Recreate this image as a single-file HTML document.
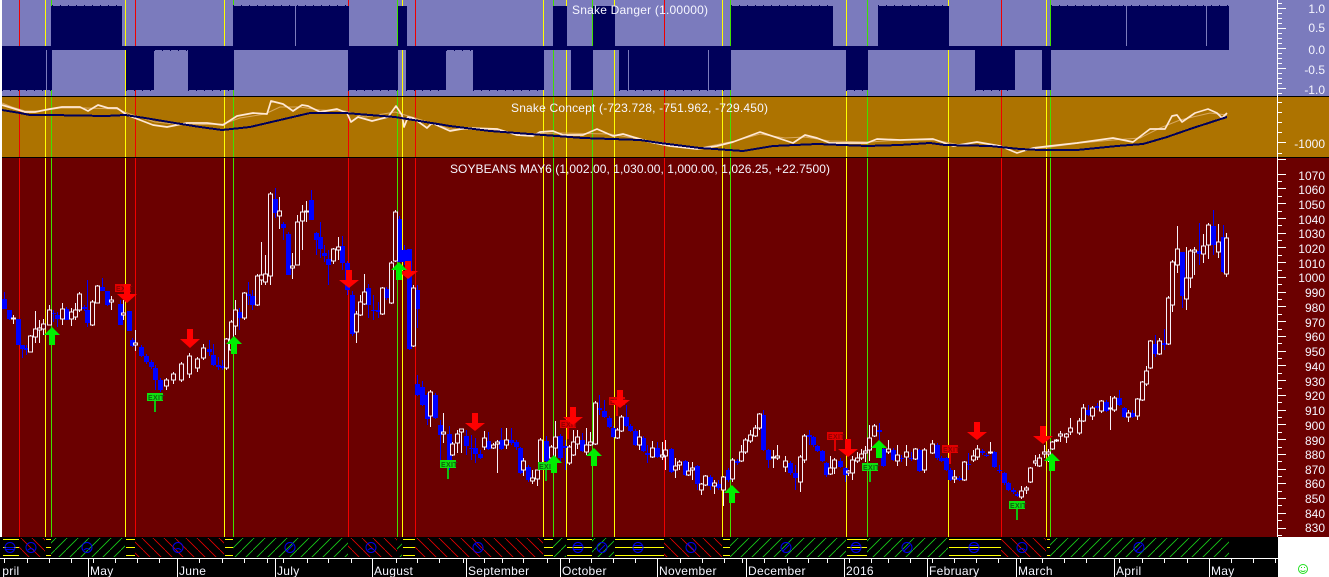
<!DOCTYPE html>
<html lang="en"><head><meta charset="utf-8"><title>Soybeans May6</title>
<style>
html,body{margin:0;padding:0;width:1329px;height:577px;overflow:hidden;background:#fff}
svg{display:block}
text{font-family:"Liberation Sans",Arial,sans-serif;font-size:12px;fill:#f6f6ff}
.m{letter-spacing:.3px}
.x{font-size:7px;font-weight:bold;letter-spacing:.3px}
</style></head><body>
<svg width="1329" height="577" viewBox="0 0 1329 577" xmlns="http://www.w3.org/2000/svg">
<defs>
<pattern id="hg" patternUnits="userSpaceOnUse" width="11" height="11"><path d="M-1 12L12 -1" stroke="#18d018" stroke-width=".8"/></pattern>
<pattern id="hr" patternUnits="userSpaceOnUse" width="11" height="11"><path d="M-1 -1L12 12" stroke="#e80000" stroke-width=".8"/></pattern>
</defs>
<!-- panels -->
<rect x="2" y="0" width="1327" height="96" fill="#7b7bbd"/>
<rect x="2" y="97" width="1327" height="60" fill="#ad7300"/>
<rect x="2" y="158" width="1327" height="379" fill="#6b0000"/>
<rect x="0" y="537" width="1278" height="21" fill="#000"/>
<rect x="0" y="558" width="1278" height="19" fill="#000"/>
<!-- vertical signal lines -->
<g stroke-width="1" shape-rendering="crispEdges">
<path stroke="#f00000" d="M19.5 0V537M135.5 0V537M348.5 0V537M415.5 0V537M664.5 0V537M1001.5 0V537"/>
<path stroke="#ffff00" d="M45.5 0V537M125.5 0V537M224.5 0V537M402.5 0V537M543.5 0V537M566.5 0V537M614.5 0V537M722.5 0V537M846.5 0V537M948.5 0V537M1046.5 0V537"/>
<path stroke="#40e000" d="M51.5 0V537M233.5 0V537M397.5 0V537M553.5 0V537M592.5 0V537M730.5 0V537M867.5 0V537M1050.5 0V537"/>
</g>
<!-- Snake Danger -->
<g fill="#00005a" shape-rendering="crispEdges">
<rect x="2" y="46" width="1227" height="4"/>
<rect x="51" y="6" width="71" height="44"/><rect x="233" y="6" width="62" height="44"/><rect x="296" y="6" width="53" height="44"/><rect x="398" y="6" width="9" height="44"/>
<rect x="553" y="6" width="14" height="44"/><rect x="593" y="6" width="22" height="44"/><rect x="731" y="6" width="102" height="44"/><rect x="878" y="6" width="71" height="44"/>
<rect x="1051" y="6" width="75" height="44"/><rect x="1127" y="6" width="79" height="44"/><rect x="1207" y="6" width="22" height="44"/>
<rect x="2" y="46" width="44" height="44"/><rect x="47" y="46" width="5" height="44"/><rect x="126" y="46" width="28" height="44"/><rect x="188" y="46" width="46" height="44"/>
<rect x="348" y="46" width="50" height="44"/><rect x="406" y="46" width="40" height="44"/><rect x="473" y="46" width="71" height="44"/><rect x="571" y="46" width="22" height="44"/>
<rect x="619" y="46" width="9" height="44"/><rect x="629" y="46" width="79" height="44"/><rect x="709" y="46" width="22" height="44"/><rect x="846" y="46" width="22" height="44"/>
<rect x="975" y="46" width="40" height="44"/><rect x="1042" y="46" width="9" height="44"/>
</g>
<g fill="none" stroke="#00005a" stroke-dasharray="1 7" shape-rendering="crispEdges">
<path d="M52 5.5H122M233 5.5H349M731 5.5H833M878 5.5H949M1051 5.5H1229M2 90.5H52M126 90.5H154M188 90.5H234M348 90.5H398M406 90.5H446M473 90.5H544M619 90.5H731M846 90.5H868M975 90.5H1015M154 50.5H233M446 50.5H473"/>
</g>
<!-- separators -->
<rect x="2" y="96" width="1276" height="1" fill="#000"/>
<rect x="2" y="157" width="1276" height="1" fill="#000"/>
<rect x="1278" y="96" width="51" height="1" fill="#000"/>
<rect x="1278" y="157" width="51" height="1" fill="#000"/>
<!-- Snake Concept -->
<g fill="none" stroke-linejoin="round">
<path stroke="#d8a860" stroke-width="1" d="M2 103L12 107L25 111L40 111L60 108L85 108L117 109L130 114L155 122L185 125L223 124L240 118L265 114L280 107L300 107L320 110L345 111L365 117L395 112L415 118L450 129L497 130L520 134L560 133L610 134L650 141L700 148L735 141L760 134L785 138L805 137L830 141L870 142L900 140L935 140L960 145L1000 146L1020 150L1050 147L1080 143L1113 140L1140 138L1160 128L1180 120L1210 113L1227 115"/>
<path stroke="#ffe8d4" stroke-width="1.7" d="M2 105L12 108L25 112L35 112L50 109L62 107L80 107L88 111L98 105L108 108L117 108L127 115L153 125L167 127L187 123L207 123L223 125L237 116L253 113L267 114L271 101L283 104L293 111L302 105L308 106L320 112L337 109L347 113L351 122L358 117L372 121L388 117L396 106L402 115L404 127L408 117L413 118L427 128L432 123L450 131L467 128L497 129L517 135L533 136L540 132L553 131L563 135L583 135L597 129L613 136L623 134L650 142L670 146L697 149L717 146L733 142L760 132L793 143L805 135L817 138L830 143L867 143L877 139L900 140L933 139L953 146L977 142L1000 146L1017 153L1033 148L1050 146L1077 143L1113 138L1133 142L1150 129L1165 129L1172 116L1177 115L1182 122L1195 113L1208 109L1217 113L1222 118L1227 113"/>
<path stroke="#00005a" stroke-width="2" shape-rendering="crispEdges" d="M2 110L20 113L30 115L50 115L106 116L125 115L145 118L175 123L200 127L222 130L250 127L280 120L310 113L345 113L395 117L450 126L490 131L530 134L583 138L640 140L660 143L700 148L743 151L773 146L817 144L867 146L900 145L930 143L945 145L990 146L1020 149L1040 150L1077 150L1117 146L1143 144L1167 137L1193 128L1227 117"/>
</g>
<!-- candles: blue -->
<g fill="none" stroke="#0000ff" shape-rendering="crispEdges">
<path stroke-width="1" d="M4.5 292V309M9.5 310V320M18.5 319V345M22.5 345V358M26.5 345V355M53.5 310V322M57.5 312V327M66.5 307V320M84.5 305V311M87.5 280V327M102.5 278V291M107.5 291V306M120.5 300V325M129.5 311V331M132.5 338V347M141.5 345V357M146.5 354V364M151.5 360V369M155.5 365V390M160.5 378V392M213.5 344V366M218.5 357V370M222.5 360V370M209.5 340V356M239.5 308V330M248.5 282V305M252.5 290V310M275.5 188V218M283.5 222V240M288.5 232V275M311.5 190V220M316.5 232V255M320.5 222V258M324.5 245V262M328.5 250V285M342.5 236V270M347.5 261V295M352.5 291V336M368.5 284V318M373.5 295V320M378.5 302V318M386.5 287V300M399.5 216V262M404.5 245V265M409.5 249V350M417.5 285V328M417.5 375V396M422.5 381V406M427.5 393V425M435.5 393V419M440.5 420V460M449.5 426V470M466.5 430V455M471.5 435V460M475.5 438V463M480.5 450V459M488.5 432V450M501.5 428V450M511.5 428V445M516.5 440V450M520.5 447V474M528.5 465V482M546.5 436V462M560.5 434V462M565.5 440V470M582.5 433V452M599.5 395V415M604.5 400V418M609.5 416V428M613.5 426V438M626.5 405V427M630.5 424V432M635.5 429V446M643.5 436V452M647.5 445V463M657.5 442V458M671.5 448V473M685.5 460V476M697.5 465V490M710.5 475V490M718.5 480V490M728.5 468V482M737.5 459V465M763.5 410V451M768.5 449V468M790.5 461V475M795.5 465V490M809.5 430V445M813.5 436V447M817.5 445V452M822.5 450V462M826.5 462V477M840.5 458V468M845.5 467V482M879.5 423V440M883.5 447V467M893.5 448V461M901.5 455V462M911.5 452V461M919.5 449V472M937.5 443V460M941.5 456V462M946.5 457V471M950.5 468V481M959.5 476V481M968.5 453V470M982.5 449V455M986.5 453V457M994.5 451V468M999.5 465V473M1004.5 472V485M1008.5 482V491M1013.5 488V494M1017.5 492V497M1088.5 405V416M1097.5 403V410M1106.5 400V412M1119.5 390V406M1124.5 407V418M1132.5 410V418M1155.5 335V357M1164.5 329V350M1182.5 252V308M1199.5 223V265M1213.5 210V255M1223.5 225V273"/>
<path stroke-width="5" d="M4.5 299V309M9.5 310V319M18.5 319V345M22.5 345V349M26.5 348V350M53.5 313V314M57.5 315V319M66.5 309V320M84.5 307V309M87.5 310V323M102.5 287V291M107.5 291V305M120.5 304V325M129.5 311V331M132.5 340V346M141.5 347V356M146.5 356V362M151.5 362V367M155.5 368V380M160.5 380V390M213.5 355V365M218.5 365V367M222.5 366V368M209.5 349V352M239.5 312V318M248.5 294V296M252.5 296V305M275.5 199V213M283.5 224V228M288.5 234V275M311.5 200V220M316.5 233V240M320.5 237V249M324.5 253V256M328.5 259V265M342.5 246V263M347.5 263V290M352.5 295V334M368.5 288V305M373.5 310V311M378.5 310V312M386.5 289V298M399.5 219V262M404.5 250V262M409.5 249V349M417.5 290V309M417.5 384V395M422.5 387V405M427.5 395V419M435.5 395V418M440.5 425V435M449.5 434V460M466.5 436V446M471.5 448V449M475.5 448V454M480.5 454V458M488.5 441V449M501.5 440V449M511.5 440V443M516.5 442V447M520.5 448V473M528.5 467V480M546.5 441V461M560.5 436V458M565.5 446V448M582.5 440V451M599.5 408V410M604.5 411V417M609.5 418V427M613.5 428V437M626.5 417V426M630.5 426V431M635.5 431V445M643.5 438V451M647.5 453V455M657.5 448V457M671.5 449V472M685.5 461V475M697.5 466V484M710.5 477V486M718.5 484V488M728.5 470V480M737.5 461V463M763.5 415V450M768.5 450V460M790.5 463V473M795.5 473V478M809.5 435V437M813.5 437V445M817.5 446V451M822.5 451V461M826.5 463V475M840.5 461V467M845.5 468V475M879.5 430V432M883.5 449V466M893.5 450V460M901.5 458V459M911.5 458V459M919.5 450V471M937.5 445V458M941.5 458V461M946.5 458V470M950.5 470V480M959.5 478V480M968.5 464V465M982.5 451V453M986.5 455V456M994.5 452V467M999.5 470V471M1004.5 473V483M1008.5 483V490M1013.5 490V492M1017.5 494V496M1088.5 410V415M1097.5 406V408M1106.5 402V411M1119.5 398V405M1124.5 408V417M1132.5 413V417M1155.5 344V354M1164.5 343V345M1182.5 252V296M1199.5 251V254M1213.5 226V245M1223.5 237V272"/>
</g>
<!-- candles: white -->
<g fill="none" stroke="#f6f2fa" stroke-width="1" shape-rendering="crispEdges">
<path d="M13.5 315V324M30.5 335V352M35.5 311V343M39.5 320V343M43.5 319V335M49.5 305V325M62.5 303V325M71.5 308V326M75.5 303V320M79.5 292V312M92.5 300V326M97.5 285V303M111.5 296V310M123.5 300V320M135.5 330V351M166.5 378V390M173.5 372V384M181.5 362V382M189.5 353V378M197.5 357V372M203.5 344V360M226.5 338V370M231.5 320V352M235.5 300V335M244.5 292V320M257.5 274V306M261.5 242V285M265.5 255V285M270.5 192V285M279.5 197V229M292.5 253V279M297.5 215V265M302.5 205V250M306.5 201V222M333.5 248V264M338.5 237V260M356.5 311V343M360.5 295V316M364.5 274V305M382.5 287V315M391.5 261V304M395.5 210V262M413.5 285V347M430.5 390V427M443.5 413V443M452.5 442V456M457.5 430V453M461.5 429V453M484.5 431V450M493.5 443V449M497.5 440V473M506.5 428V449M523.5 458V476M532.5 470V484M537.5 470V486M540.5 438V464M551.5 445V472M555.5 421V460M569.5 445V465M573.5 430V456M577.5 430V449M586.5 428V455M590.5 432V446M595.5 401V445M617.5 428V439M621.5 415V432M639.5 430V450M652.5 441V458M662.5 442V460M665.5 440V470M675.5 458V478M679.5 460V470M688.5 462V476M692.5 462V480M701.5 483V495M705.5 475V486M714.5 480V494M723.5 476V506M732.5 458V482M741.5 445V462M745.5 438V454M750.5 430V443M755.5 425V437M759.5 413V430M773.5 450V468M777.5 445V460M785.5 456V472M800.5 455V492M804.5 434V463M830.5 456V475M834.5 458V474M848.5 470V476M852.5 456V480M857.5 452V463M861.5 449V460M865.5 446V462M869.5 425V461M874.5 424V437M888.5 440V454M897.5 445V466M906.5 445V466M915.5 448V460M924.5 448V473M932.5 440V454M954.5 470V483M964.5 461V481M973.5 450V462M977.5 445V460M990.5 442V454M1021.5 486V499M1026.5 486V494M1030.5 467V483M1035.5 455V466M1039.5 454V467M1044.5 445V458M1048.5 449V462M1052.5 441V450M1056.5 439V442M1060.5 431V442M1066.5 433V443M1070.5 418V435M1079.5 418V435M1083.5 404V422M1092.5 406V420M1101.5 400V413M1110.5 396V430M1114.5 396V412M1128.5 410V422M1137.5 398V420M1142.5 381V401M1146.5 366V386M1150.5 340V369M1159.5 338V355M1168.5 296V345M1172.5 260V312M1177.5 226V273M1186.5 247V310M1190.5 249V288M1194.5 247V275M1203.5 234V263M1208.5 223V259M1218.5 224V258M1226.5 233V277"/>
<path fill="#6b0000" d="M11.5 318h4V319h-4zM28.5 336h4V352h-4zM33.5 329h4V337h-4zM37.5 328h4V330h-4zM41.5 324h4V329h-4zM47.5 310h4V325h-4zM60.5 309h4V319h-4zM69.5 312h4V319h-4zM73.5 310h4V317h-4zM77.5 294h4V310h-4zM90.5 302h4V325h-4zM95.5 286h4V303h-4zM109.5 300h4V302h-4zM121.5 313h4V315h-4zM133.5 343h4V345h-4zM164.5 380h4V386h-4zM171.5 374h4V380h-4zM179.5 364h4V380h-4zM187.5 356h4V374h-4zM195.5 359h4V368h-4zM201.5 348h4V358h-4zM224.5 339h4V368h-4zM229.5 322h4V350h-4zM233.5 310h4V326h-4zM242.5 293h4V318h-4zM255.5 276h4V305h-4zM259.5 275h4V280h-4zM263.5 274h4V282h-4zM268.5 194h4V276h-4zM277.5 211h4V216h-4zM290.5 266h4V268h-4zM295.5 222h4V265h-4zM300.5 212h4V221h-4zM304.5 211h4V212h-4zM331.5 249h4V261h-4zM336.5 247h4V250h-4zM354.5 314h4V332h-4zM358.5 302h4V315h-4zM362.5 292h4V304h-4zM380.5 288h4V314h-4zM389.5 263h4V303h-4zM393.5 212h4V261h-4zM411.5 288h4V346h-4zM428.5 392h4V416h-4zM441.5 432h4V434h-4zM450.5 444h4V455h-4zM455.5 434h4V443h-4zM459.5 429h4V432h-4zM482.5 438h4V447h-4zM491.5 445h4V448h-4zM495.5 442h4V444h-4zM504.5 440h4V445h-4zM521.5 461h4V470h-4zM530.5 478h4V481h-4zM535.5 470h4V479h-4zM538.5 440h4V463h-4zM549.5 447h4V458h-4zM553.5 437h4V448h-4zM567.5 447h4V463h-4zM571.5 442h4V455h-4zM575.5 437h4V444h-4zM584.5 445h4V452h-4zM588.5 442h4V445h-4zM593.5 403h4V444h-4zM615.5 430h4V438h-4zM619.5 417h4V431h-4zM637.5 437h4V445h-4zM650.5 448h4V457h-4zM660.5 455h4V457h-4zM663.5 450h4V456h-4zM673.5 466h4V470h-4zM677.5 462h4V465h-4zM686.5 471h4V475h-4zM690.5 468h4V470h-4zM699.5 484h4V490h-4zM703.5 476h4V485h-4zM712.5 483h4V486h-4zM721.5 477h4V490h-4zM730.5 460h4V479h-4zM739.5 452h4V461h-4zM743.5 440h4V452h-4zM748.5 435h4V441h-4zM753.5 428h4V436h-4zM757.5 414h4V428h-4zM771.5 457h4V458h-4zM775.5 456h4V458h-4zM783.5 461h4V467h-4zM798.5 457h4V482h-4zM802.5 436h4V460h-4zM828.5 468h4V474h-4zM832.5 460h4V468h-4zM846.5 471h4V473h-4zM850.5 460h4V473h-4zM855.5 458h4V461h-4zM859.5 454h4V458h-4zM863.5 451h4V453h-4zM867.5 438h4V450h-4zM872.5 426h4V436h-4zM886.5 449h4V452h-4zM895.5 455h4V461h-4zM904.5 452h4V457h-4zM913.5 449h4V459h-4zM922.5 450h4V470h-4zM930.5 444h4V453h-4zM952.5 477h4V479h-4zM962.5 462h4V480h-4zM971.5 456h4V460h-4zM975.5 449h4V457h-4zM988.5 452h4V453h-4zM1019.5 491h4V497h-4zM1024.5 488h4V490h-4zM1028.5 468h4V482h-4zM1033.5 461h4V463h-4zM1037.5 458h4V466h-4zM1042.5 452h4V454h-4zM1046.5 452h4V454h-4zM1050.5 442h4V449h-4zM1054.5 440h4V441h-4zM1058.5 434h4V436h-4zM1064.5 434h4V437h-4zM1068.5 428h4V432h-4zM1077.5 421h4V433h-4zM1081.5 408h4V421h-4zM1090.5 408h4V416h-4zM1099.5 401h4V411h-4zM1108.5 408h4V409h-4zM1112.5 398h4V410h-4zM1126.5 413h4V417h-4zM1135.5 399h4V416h-4zM1140.5 382h4V400h-4zM1144.5 371h4V384h-4zM1148.5 341h4V368h-4zM1157.5 341h4V354h-4zM1166.5 298h4V344h-4zM1170.5 262h4V305h-4zM1175.5 249h4V265h-4zM1184.5 278h4V299h-4zM1188.5 251h4V278h-4zM1192.5 250h4V252h-4zM1201.5 246h4V254h-4zM1206.5 225h4V245h-4zM1216.5 242h4V252h-4zM1224.5 238h4V274h-4z"/>
</g>
<!-- exit signs -->
<g shape-rendering="crispEdges">
<rect x="115" y="284" width="16" height="8" fill="#e00000"/>
<rect x="560" y="420" width="16" height="8" fill="#e00000"/><rect x="567" y="428" width="2" height="11" fill="#e00000"/>
<rect x="609" y="397" width="16" height="8" fill="#e00000"/><rect x="616" y="405" width="2" height="11" fill="#e00000"/>
<rect x="827" y="432" width="16" height="8" fill="#e00000"/><rect x="834" y="440" width="2" height="11" fill="#e00000"/>
<rect x="942" y="445" width="16" height="8" fill="#e00000"/><rect x="949" y="453" width="2" height="11" fill="#e00000"/>
<rect x="147" y="393" width="16" height="8" fill="#10e010"/><rect x="154" y="401" width="2" height="11" fill="#10c010"/>
<rect x="440" y="460" width="16" height="8" fill="#10e010"/><rect x="447" y="468" width="2" height="11" fill="#10c010"/>
<rect x="538" y="462" width="16" height="8" fill="#10e010"/><rect x="545" y="470" width="2" height="11" fill="#10c010"/>
<rect x="862" y="463" width="16" height="8" fill="#10e010"/><rect x="869" y="471" width="2" height="11" fill="#10c010"/>
<rect x="1009" y="501" width="16" height="8" fill="#10e010"/><rect x="1016" y="509" width="2" height="11" fill="#10c010"/>
</g>
<g>
<text class="x" x="116" y="291" style="fill:#900000">EXIT</text>
<text class="x" x="561" y="427" style="fill:#900000">EXIT</text>
<text class="x" x="610" y="404" style="fill:#900000">EXIT</text>
<text class="x" x="828" y="439" style="fill:#900000">EXIT</text>
<text class="x" x="943" y="452" style="fill:#900000">EXIT</text>
<text class="x" x="148" y="400" style="fill:#106010">EXIT</text>
<text class="x" x="441" y="467" style="fill:#106010">EXIT</text>
<text class="x" x="539" y="469" style="fill:#106010">EXIT</text>
<text class="x" x="863" y="470" style="fill:#106010">EXIT</text>
<text class="x" x="1010" y="508" style="fill:#106010">EXIT</text>
</g>
<!-- arrows -->
<g fill="#ff0000">
<path d="M124 284h6v10h7l-10 9l-10-9h7z"/>
<path d="M187 329h6v10h7l-10 9l-10-9h7z"/>
<path d="M346 270h6v10h7l-10 8l-10-8h7z"/>
<path d="M405 261h6v10h7l-10 8l-10-8h7z"/>
<path d="M472 413h6v10h7l-10 8l-10-8h7z"/>
<path d="M570 407h6v10h7l-10 8l-10-8h7z"/>
<path d="M617 390h6v10h7l-10 8l-10-8h7z"/>
<path d="M845 439h6v10h7l-10 8l-10-8h7z"/>
<path d="M974 422h6v10h7l-10 8l-10-8h7z"/>
<path d="M1040 426h6v10h7l-10 8l-10-8h7z"/>
</g>
<g fill="#00f000">
<path d="M52 327l8 8h-5v10h-6v-10h-5z"/>
<path d="M234 336l8 8h-5v10h-6v-10h-5z"/>
<path d="M399 262l8 8h-5v10h-6v-10h-5z"/>
<path d="M554 455l8 8h-5v10h-6v-10h-5z"/>
<path d="M594 448l8 8h-5v10h-6v-10h-5z"/>
<path d="M732 485l8 8h-5v10h-6v-10h-5z"/>
<path d="M879 440l8 8h-5v10h-6v-10h-5z"/>
<path d="M1052 453l8 8h-5v10h-6v-10h-5z"/>
</g>
<!-- state band -->
<g>
<g fill="url(#hr)"><rect x="19" y="538" width="26" height="19"/><rect x="135" y="538" width="89" height="19"/><rect x="348" y="538" width="49" height="19"/><rect x="415" y="538" width="128" height="19"/><rect x="664" y="538" width="58" height="19"/><rect x="1001" y="538" width="45" height="19"/></g>
<g fill="url(#hg)"><rect x="51" y="538" width="74" height="19"/><rect x="233" y="538" width="115" height="19"/><rect x="397" y="538" width="5" height="19"/><rect x="553" y="538" width="13" height="19"/><rect x="592" y="538" width="22" height="19"/><rect x="730" y="538" width="116" height="19"/><rect x="867" y="538" width="81" height="19"/><rect x="1050" y="538" width="179" height="19"/></g>
<path fill="none" stroke="#ffff00" shape-rendering="crispEdges" d="M3 539.5H19M3 547.5H19M3 555.5H19M46 539.5H51M46 547.5H51M46 555.5H51M126 539.5H135M126 547.5H135M126 555.5H135M225 539.5H233M225 547.5H233M225 555.5H233M403 539.5H415M403 547.5H415M403 555.5H415M544 539.5H553M544 547.5H553M544 555.5H553M567 539.5H592M567 547.5H592M567 555.5H592M615 539.5H664M615 547.5H664M615 555.5H664M723 539.5H730M723 547.5H730M723 555.5H730M847 539.5H867M847 547.5H867M847 555.5H867M949 539.5H1001M949 547.5H1001M949 555.5H1001M1047 539.5H1050M1047 547.5H1050M1047 555.5H1050"/>
<g fill="none" stroke="#0000f0" stroke-width="1">
<circle cx="10" cy="547.5" r="5"/><circle cx="31" cy="547.5" r="5"/><circle cx="87" cy="547.5" r="5"/><circle cx="178" cy="547.5" r="5"/><circle cx="290" cy="547.5" r="5"/><circle cx="371" cy="547.5" r="5"/><circle cx="478" cy="547.5" r="5"/><circle cx="578" cy="547.5" r="5"/><circle cx="602" cy="547.5" r="5"/><circle cx="638" cy="547.5" r="5"/><circle cx="691" cy="547.5" r="5"/><circle cx="786" cy="547.5" r="5"/><circle cx="856" cy="547.5" r="5"/><circle cx="907" cy="547.5" r="5"/><circle cx="974" cy="547.5" r="5"/><circle cx="1022" cy="547.5" r="5"/><circle cx="1139" cy="547.5" r="5"/>
<path d="M6 547.5h8M6 549.5h8M28 550q3-3 6 0M84 550q3-3 6 0M175 550q3-3 6 0M287 551l6-6M368 550q3-3 6 0M475 544l6 6M574 545.5h8M574 549.5h8M599 551l6-6M634 545.5h8M634 549.5h8M688 544l6 6M783 551l6-6M852 545.5h8M852 549.5h8M904 551l6-6M970 545.5h8M970 549.5h8M1019 550q3-3 6 0M1136 551l6-6"/>
</g>
</g>
<!-- time axis -->
<g fill="none" stroke="#fff" stroke-width="1" shape-rendering="crispEdges">
<path d="M0 558.5H1278"/>
<path d="M4.5 559V563M27.5 559V563M49.5 559V563M71.5 559V563M93.5 559V563M115.5 559V563M137.5 559V563M159.5 559V563M199.5 559V563M222.5 559V563M244.5 559V563M267.5 559V563M283.5 559V563M307.5 559V563M328.5 559V563M351.5 559V563M396.5 559V563M417.5 559V563M439.5 559V563M463.5 559V563M484.5 559V563M502.5 559V563M523.5 559V563M547.5 559V563M569.5 559V563M591.5 559V563M613.5 559V563M635.5 559V563M680.5 559V563M702.5 559V563M724.5 559V563M742.5 559V563M764.5 559V563M787.5 559V563M808.5 559V563M827.5 559V563M849.5 559V563M871.5 559V563M888.5 559V563M910.5 559V563M932.5 559V563M954.5 559V563M976.5 559V563M998.5 559V563M1020.5 559V563M1042.5 559V563M1064.5 559V563M1086.5 559V563M1119.5 559V563M1142.5 559V563M1164.5 559V563M1187.5 559V563M1231.5 559V563M1253.5 559V563M1275.5 559V563"/>
<path d="M88.5 558V577M177.5 558V577M275.5 558V577M372.5 558V577M466.5 558V577M560.5 558V577M657.5 558V577M746.5 558V577M844.5 558V577M927.5 558V577M1016.5 558V577M1114.5 558V577M1209.5 558V577"/>
</g>
<g class="m">
<text x="-6" y="575">April</text>
<text x="90" y="575">May</text><text x="179" y="575">June</text><text x="277" y="575">July</text><text x="374" y="575">August</text><text x="468" y="575">September</text><text x="562" y="575">October</text><text x="659" y="575">November</text><text x="748" y="575">December</text><text x="846" y="575">2016</text><text x="929" y="575">February</text><text x="1018" y="575">March</text><text x="1116" y="575">April</text><text x="1211" y="575">May</text>
</g>
<rect x="0" y="560" width="2" height="17" fill="#000"/>
<rect x="0" y="0" width="2" height="537" fill="#fff"/>
<!-- right axis -->
<g fill="none" stroke="#fff" stroke-width="1" shape-rendering="crispEdges">
<path d="M1277.5 0V537"/>
<path d="M1278 3.5h4M1278 8.5h8M1278 13.5h4M1278 18.5h4M1278 23.5h4M1278 28.5h8M1278 33.5h4M1278 38.5h4M1278 43.5h4M1278 48.5h8M1278 53.5h4M1278 58.5h4M1278 63.5h4M1278 68.5h8M1278 73.5h4M1278 78.5h4M1278 83.5h4M1278 88.5h8M1278 93.5h4"/>
<path d="M1278 102.5h4M1278 112.5h4M1278 122.5h4M1278 132.5h4M1278 142.5h8M1278 153.5h4"/>
<path d="M1278 159.5h8M1278 174.5h8M1278 181.5h4M1278 188.5h8M1278 196.5h4M1278 203.5h8M1278 211.5h4M1278 218.5h8M1278 225.5h4M1278 233.5h8M1278 240.5h4M1278 247.5h8M1278 255.5h4M1278 262.5h8M1278 270.5h4M1278 277.5h8M1278 284.5h4M1278 292.5h8M1278 299.5h4M1278 306.5h8M1278 314.5h4M1278 321.5h8M1278 329.5h4M1278 336.5h8M1278 343.5h4M1278 351.5h8M1278 358.5h4M1278 365.5h8M1278 373.5h4M1278 380.5h8M1278 388.5h4M1278 395.5h8M1278 402.5h4M1278 410.5h8M1278 417.5h4M1278 424.5h8M1278 432.5h4M1278 439.5h8M1278 447.5h4M1278 454.5h8M1278 461.5h4M1278 469.5h8M1278 476.5h4M1278 483.5h8M1278 491.5h4M1278 498.5h8M1278 505.5h4M1278 513.5h8M1278 520.5h4M1278 528.5h8M1278 535.5h4"/>
</g>
<g text-anchor="end">
<text x="1325" y="13">1.0</text><text x="1325" y="32">0.5</text><text x="1325" y="54">0.0</text><text x="1325" y="74">-0.5</text><text x="1325" y="94">-1.0</text>
<text x="1325" y="148">-1000</text>
<text x="1325" y="180">1070</text><text x="1325" y="194">1060</text><text x="1325" y="209">1050</text><text x="1325" y="224">1040</text><text x="1325" y="238">1030</text><text x="1325" y="253">1020</text><text x="1325" y="268">1010</text><text x="1325" y="282">1000</text><text x="1325" y="297">990</text><text x="1325" y="312">980</text><text x="1325" y="327">970</text><text x="1325" y="341">960</text><text x="1325" y="356">950</text><text x="1325" y="371">940</text><text x="1325" y="386">930</text><text x="1325" y="400">920</text><text x="1325" y="415">910</text><text x="1325" y="430">900</text><text x="1325" y="445">890</text><text x="1325" y="459">880</text><text x="1325" y="474">870</text><text x="1325" y="488">860</text><text x="1325" y="503">850</text><text x="1325" y="518">840</text><text x="1325" y="532">830</text>
</g>
<!-- titles -->
<text x="572" y="14" textLength="136" lengthAdjust="spacing">Snake Danger (1.00000)</text>
<text x="511" y="112" textLength="257" lengthAdjust="spacing">Snake Concept (-723.728, -751.962, -729.450)</text>
<text x="450" y="173" textLength="380" lengthAdjust="spacing">SOYBEANS MAY6 (1,002.00, 1,030.00, 1,000.00, 1,026.25, +22.7500)</text>
<!-- smiley -->
<rect x="1278" y="537" width="51" height="40" fill="#fff"/>
<g fill="none" stroke="#20e020" stroke-width="1"><circle cx="1303" cy="569" r="4.5"/><path d="M1300.5 570.5q2.5 2 5 0"/></g>
<path d="M1301 567h1v1h-1zM1304 567h1v1h-1z" fill="#20e020"/>
</svg>
</body></html>
